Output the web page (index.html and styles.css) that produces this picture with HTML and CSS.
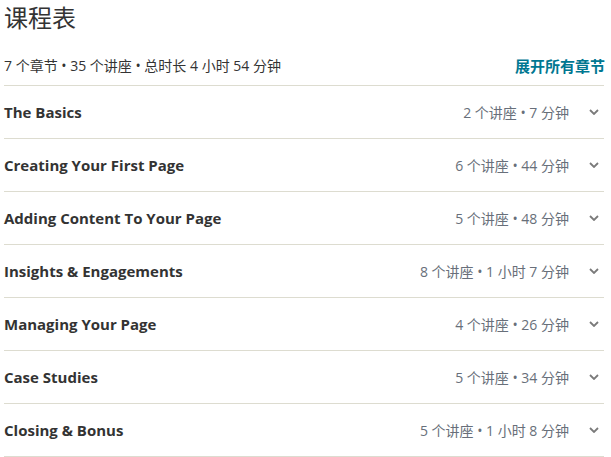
FILE: index.html
```html
<!DOCTYPE html>
<html lang="zh">
<head>
<meta charset="utf-8">
<link rel="stylesheet" href="styles.css">
</head>
<body>
<div class="curriculum">
  <h2 class="title">课程表</h2>
  <div class="summary">
    <span class="summary-text">7 个章节 • 35 个讲座 • 总时长 4 小时 54 分钟</span>
    <a class="expand" href="#">展开所有章节</a>
  </div>
  <ul class="sections">
    <li class="section"><span class="name">The Basics</span><span class="meta">2 个讲座 • 7 分钟</span><svg class="chev" viewBox="0 0 10 6"><path d="M1 1 L5 5 L9 1" fill="none" stroke="#7a7a7a" stroke-width="1.8"/></svg></li>
    <li class="section"><span class="name">Creating Your First Page</span><span class="meta">6 个讲座 • 44 分钟</span><svg class="chev" viewBox="0 0 10 6"><path d="M1 1 L5 5 L9 1" fill="none" stroke="#7a7a7a" stroke-width="1.8"/></svg></li>
    <li class="section"><span class="name">Adding Content To Your Page</span><span class="meta">5 个讲座 • 48 分钟</span><svg class="chev" viewBox="0 0 10 6"><path d="M1 1 L5 5 L9 1" fill="none" stroke="#7a7a7a" stroke-width="1.8"/></svg></li>
    <li class="section"><span class="name">Insights &amp; Engagements</span><span class="meta">8 个讲座 • 1 小时 7 分钟</span><svg class="chev" viewBox="0 0 10 6"><path d="M1 1 L5 5 L9 1" fill="none" stroke="#7a7a7a" stroke-width="1.8"/></svg></li>
    <li class="section"><span class="name">Managing Your Page</span><span class="meta">4 个讲座 • 26 分钟</span><svg class="chev" viewBox="0 0 10 6"><path d="M1 1 L5 5 L9 1" fill="none" stroke="#7a7a7a" stroke-width="1.8"/></svg></li>
    <li class="section"><span class="name">Case Studies</span><span class="meta">5 个讲座 • 34 分钟</span><svg class="chev" viewBox="0 0 10 6"><path d="M1 1 L5 5 L9 1" fill="none" stroke="#7a7a7a" stroke-width="1.8"/></svg></li>
    <li class="section"><span class="name">Closing &amp; Bonus</span><span class="meta">5 个讲座 • 1 小时 8 分钟</span><svg class="chev" viewBox="0 0 10 6"><path d="M1 1 L5 5 L9 1" fill="none" stroke="#7a7a7a" stroke-width="1.8"/></svg></li>
  </ul>
</div>
</body>
</html>
```

FILE: styles.css
```css
html, body {
  margin: 0;
  padding: 0;
  background: #fff;
}
body {
  font-family: "Open Sans", "Noto Sans CJK SC", sans-serif;
  color: #29303b;
}
.curriculum {
  width: 600px;
  margin-left: 4px;
}
.title {
  margin: 0;
  padding-top: 1px;
  height: 44px;
  font-size: 24px;
  line-height: 32px;
  font-weight: 400;
  font-family: "Noto Sans CJK SC", sans-serif;
  color: #333;
}
.summary {
  display: flex;
  justify-content: space-between;
  align-items: center;
  height: 40px;
  font-size: 14px;
}
.summary-text {
  color: #333;
}
.expand {
  color: #007791;
  font-weight: 700;
  text-decoration: none;
  font-size: 15px;
  font-family: "Noto Sans CJK SC", sans-serif;
  margin-right: -1px;
}
.sections {
  list-style: none;
  margin: 0;
  padding: 0;
}
.section {
  display: flex;
  align-items: center;
  height: 52px;
  border-top: 1px solid #dddcd0;
}
.section:last-child {
  border-bottom: 1px solid #dddcd0;
}
.name {
  flex: 1;
  font-weight: 700;
  font-size: 15px;
  color: #333;
}
.meta {
  font-size: 14px;
  color: #686f7a;
}
.chev {
  margin-left: 20px;
  margin-right: 5px;
  width: 10px;
  height: 6px;
}
```
